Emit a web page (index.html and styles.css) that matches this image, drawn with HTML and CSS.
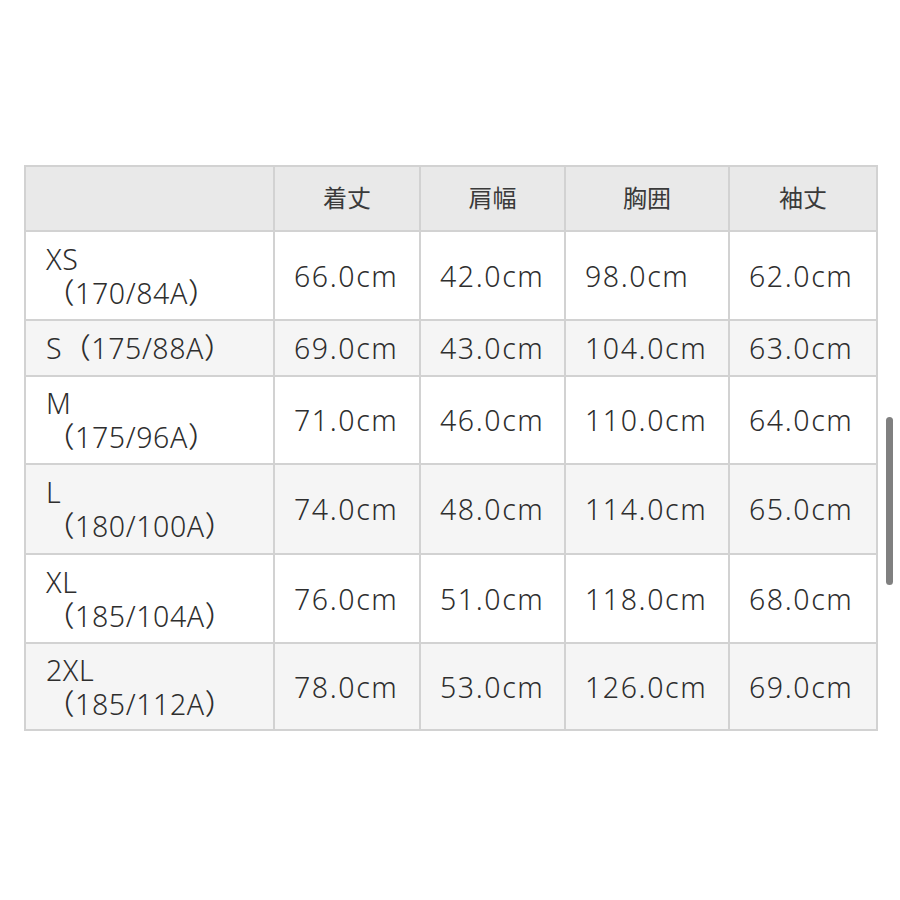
FILE: index.html
```html
<!DOCTYPE html>
<html lang="ja">
<head>
<meta charset="utf-8">
<link rel="stylesheet" href="styles.css">
</head>
<body>
<div class="page">
  <table class="size-table">
    <colgroup>
      <col class="c1"><col class="c2"><col class="c3"><col class="c4"><col class="c5">
    </colgroup>
    <thead>
      <tr class="head">
        <th></th><th>着丈</th><th>肩幅</th><th>胸囲</th><th>袖丈</th>
      </tr>
    </thead>
    <tbody>
      <tr class="r-xs"><td class="size">XS<br>（170/84A）</td><td>66.0cm</td><td>42.0cm</td><td>98.0cm</td><td>62.0cm</td></tr>
      <tr class="alt r-s"><td class="size">S（175/88A）</td><td>69.0cm</td><td>43.0cm</td><td>104.0cm</td><td>63.0cm</td></tr>
      <tr class="r-m"><td class="size">M<br>（175/96A）</td><td>71.0cm</td><td>46.0cm</td><td>110.0cm</td><td>64.0cm</td></tr>
      <tr class="alt r-l"><td class="size">L<br>（180/100A）</td><td>74.0cm</td><td>48.0cm</td><td>114.0cm</td><td>65.0cm</td></tr>
      <tr class="r-xl"><td class="size">XL<br>（185/104A）</td><td>76.0cm</td><td>51.0cm</td><td>118.0cm</td><td>68.0cm</td></tr>
      <tr class="alt r-2xl"><td class="size">2XL<br>（185/112A）</td><td>78.0cm</td><td>53.0cm</td><td>126.0cm</td><td>69.0cm</td></tr>
    </tbody>
  </table>
  <div class="scrollbar"></div>
</div>
</body>
</html>
```
FILE: styles.css
```css
html, body {
  margin: 0;
  padding: 0;
  background: #ffffff;
}
.page {
  position: relative;
  width: 900px;
  height: 900px;
  padding: 165px 0 0 24px;
  box-sizing: border-box;
}
.size-table {
  border-collapse: collapse;
  table-layout: fixed;
  width: 852px;
  font-family: "Noto Sans", "Noto Sans CJK JP", sans-serif;
  color: #2e2e2e;
}
.c1 { width: 249px; }
.c2 { width: 146px; }
.c3 { width: 145px; }
.c4 { width: 164px; }
.c5 { width: 148px; }
.size-table th,
.size-table td {
  border: 2px solid #d2d2d2;
  padding: 0 0 0 19px;
  text-align: left;
  vertical-align: middle;
  font-size: 28.5px;
  line-height: 34px;
  font-weight: 350;
  letter-spacing: 1.6px;
}
.size-table th {
  font-family: "Noto Sans CJK JP", sans-serif;
  background: #e9e9e9;
  text-align: center;
  padding: 0 0 3px 0;
  font-size: 24px;
  font-weight: 400;
  color: #3a3a3a;
  letter-spacing: 0;
}
.head { height: 65px; }
.r-xs { height: 89px; }
.r-s { height: 56px; }
.r-m { height: 88px; }
.r-l { height: 90px; }
.r-xl { height: 89px; }
.r-2xl { height: 87px; }
.alt td { background: #f5f5f5; }
.size-table td.size {
  padding-left: 20px;
  letter-spacing: 0.6px;
}
.scrollbar {
  position: absolute;
  left: 886px;
  top: 417px;
  width: 7px;
  height: 168px;
  border-radius: 4px;
  background: #808080;
}
```
